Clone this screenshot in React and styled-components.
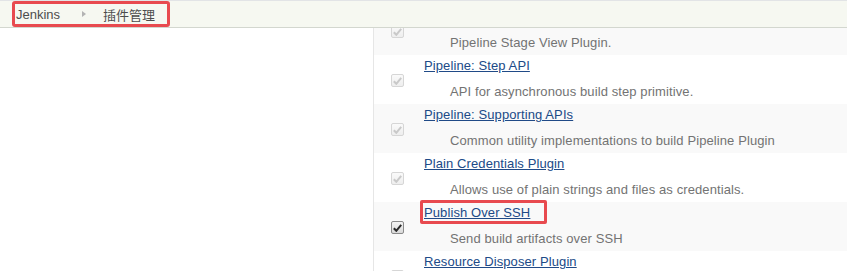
import React from 'react'
import styled, { createGlobalStyle } from 'styled-components'

const GlobalStyle = createGlobalStyle`
  html, body {
    margin: 0;
    padding: 0;
    background: #fff;
    font-family: "Liberation Sans", Arial, "Noto Sans CJK SC", sans-serif;
    font-size: 13px;
  }
`

const plugins = [
    { name: 'Pipeline: Stage View Plugin', excerpt: 'Pipeline Stage View Plugin.' },
    { name: 'Pipeline: Step API', excerpt: 'API for asynchronous build step primitive.' },
    { name: 'Pipeline: Supporting APIs', excerpt: 'Common utility implementations to build Pipeline Plugin' },
    { name: 'Plain Credentials Plugin', excerpt: 'Allows use of plain strings and files as credentials.' },
    { name: 'Publish Over SSH', excerpt: 'Send build artifacts over SSH', enabled: true, marked: true },
    { name: 'Resource Disposer Plugin', excerpt: 'Disposes of resources asynchronously.' },
]

export default function App() {
    return (
        <>
            <GlobalStyle />
            <Page>
                <Header>
                    <Breadcrumbs>
                        <Crumb>Jenkins</Crumb>
                        <Separator />
                        <Crumb>插件管理</Crumb>
                    </Breadcrumbs>
                </Header>
                <Body>
                    <SidePanel />
                    <Main>
                        <PluginTable>
                            {plugins.map((p, i) => (
                                <Row key={p.name} $odd={i % 2 === 0}>
                                    <CheckCell>
                                        <Checkbox $enabled={p.enabled}>
                                            <svg width="9" height="8" viewBox="0 0 9 8">
                                                <path d="M0.8 4.2 L3.3 6.8 L8.2 0.9" fill="none" strokeWidth="2" />
                                            </svg>
                                        </Checkbox>
                                    </CheckCell>
                                    <NameCell>
                                        {p.marked ? (
                                            <Marked><PluginLink href="#">{p.name}</PluginLink></Marked>
                                        ) : (
                                            <PluginLink href="#">{p.name}</PluginLink>
                                        )}
                                        <Excerpt>{p.excerpt}</Excerpt>
                                    </NameCell>
                                </Row>
                            ))}
                        </PluginTable>
                    </Main>
                </Body>
            </Page>
        </>
    )
}

const Page = styled.div`
    height: 271px;
    display: flex;
    flex-direction: column;
    overflow: hidden;
`

const Header = styled.div`
    height: 26px;
    flex: none;
    display: flex;
    background: #f6f8f1;
    border-top: 1px solid #e2e4e6;
    border-bottom: 1px solid #d3d7cf;
    position: relative;
    z-index: 1;
`

const Breadcrumbs = styled.ul`
    list-style: none;
    margin: 0 0 0 16px;
    padding: 0 15px 0 0;
    display: flex;
    align-items: center;
    position: relative;

    &::after {
        content: '';
        position: absolute;
        inset: 0 0 0 -4px;
        border: 3px solid #e84a4f;
        border-radius: 3px;
    }
`

const Crumb = styled.li`
    color: #4d4d4d;
    font-size: 13px;
`

const Separator = styled.li`
    width: 0;
    height: 0;
    margin: 0 17px 0 22px;
    border-left: 4px solid #b3b3b3;
    border-top: 3px solid transparent;
    border-bottom: 3px solid transparent;
`

const Body = styled.div`
    flex: 1;
    display: flex;
    min-height: 0;
`

const SidePanel = styled.div`
    width: 373px;
    flex: none;
    background: #fff;
    border-right: 1px solid #e6e6e6;
`

const Main = styled.div`
    flex: 1;
    overflow: hidden;
`

/* list is scrolled: the first row sits partly under the header */
const PluginTable = styled.div`
    margin-top: -22px;
`

const Row = styled.div`
    display: grid;
    grid-template-columns: 50px 1fr;
    min-height: 49px;
    background: ${p => (p.$odd ? '#f9f9f9' : '#fff')};
`

const CheckCell = styled.div`
    display: flex;
    align-items: flex-start;
    padding: 19px 0 0 17px;
`

const Checkbox = styled.span`
    width: 11px;
    height: 11px;
    display: flex;
    align-items: center;
    justify-content: center;
    border-radius: 2px;
    border: 1px solid ${p => (p.$enabled ? '#8a8a8a' : '#d6d6d6')};
    background: ${p => (p.$enabled
        ? 'linear-gradient(#f4f4f4, #d9d9d9)'
        : 'linear-gradient(#fafafa, #eeeeee)')};

    svg path {
        stroke: ${p => (p.$enabled ? '#2a2a2a' : '#c9c9c9')};
    }
`

const NameCell = styled.div`
    padding: 2px 0 4px;
    line-height: 17px;
    letter-spacing: 0.1px;
`

const PluginLink = styled.a`
    color: #204a87;
    text-decoration: underline;
    font-size: 13px;
`

const Marked = styled.span`
    position: relative;

    &::after {
        content: '';
        position: absolute;
        inset: -5px -17px -4px -4px;
        border: 3px solid #e84a4f;
        border-radius: 2px;
    }
`

const Excerpt = styled.div`
    margin: 9px 0 0 26px;
    color: #737373;
    font-size: 13px;
`
